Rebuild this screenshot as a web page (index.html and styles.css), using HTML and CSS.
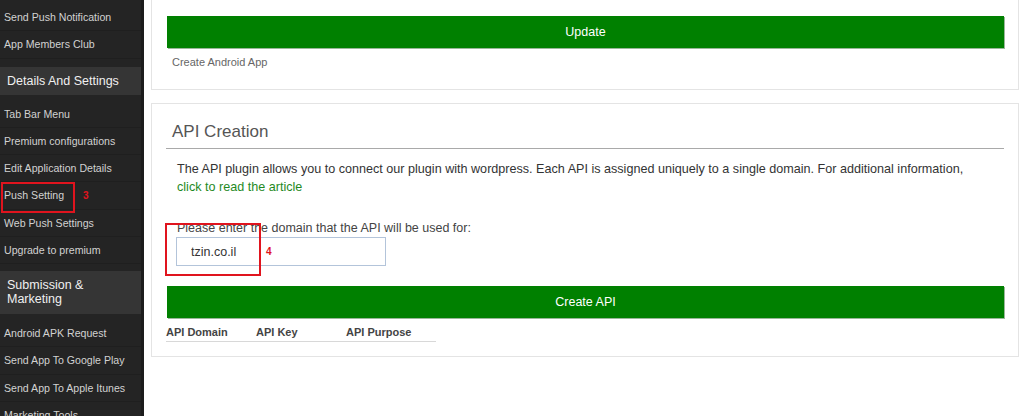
FILE: index.html
```html
<!DOCTYPE html>
<html lang="en">
<head>
<meta charset="utf-8">
<title>API Creation</title>
<link rel="stylesheet" href="styles.css">
</head>
<body>
<div class="layout">
  <aside class="sidebar">
    <a class="nav-item" href="#">Send Push Notification</a>
    <a class="nav-item" href="#">App Members Club</a>
    <div class="nav-head">Details And Settings</div>
    <a class="nav-item" href="#">Tab Bar Menu</a>
    <a class="nav-item" href="#">Premium configurations</a>
    <a class="nav-item" href="#">Edit Application Details</a>
    <a class="nav-item nav-item--marked" href="#">Push Setting<span class="mark-box mark-box--nav"></span><span class="mark-num mark-num--nav">3</span></a>
    <a class="nav-item" href="#">Web Push Settings</a>
    <a class="nav-item" href="#">Upgrade to premium</a>
    <div class="nav-head nav-head--tall">Submission &amp;<br>Marketing</div>
    <a class="nav-item" href="#">Android APK Request</a>
    <a class="nav-item" href="#">Send App To Google Play</a>
    <a class="nav-item" href="#">Send App To Apple Itunes</a>
    <a class="nav-item" href="#">Marketing Tools</a>
  </aside>
  <main class="main">
    <section class="panel panel--cut">
      <button class="btn-green">Update</button>
      <div class="caption">Create Android App</div>
    </section>
    <section class="panel panel--api">
      <h2 class="panel-title">API Creation</h2>
      <p class="intro">The API plugin allows you to connect our plugin with wordpress. Each API is assigned uniquely to a single domain. For additional information,<br><a class="link" href="#">click to read the article</a></p>
      <div class="field">
        <label class="field-label">Please enter the domain that the API will be used for:</label>
        <div class="field-wrap">
          <input class="field-input" type="text" value="tzin.co.il">
          <span class="mark-box mark-box--input"></span>
          <span class="mark-num mark-num--input">4</span>
        </div>
      </div>
      <button class="btn-green btn-green--api">Create API</button>
      <div class="api-table">
        <div class="api-th">API Domain</div>
        <div class="api-th">API Key</div>
        <div class="api-th">API Purpose</div>
      </div>
    </section>
  </main>
</div>
</body>
</html>
```

FILE: styles.css
```css
* { box-sizing: border-box; }
html, body { margin: 0; padding: 0; }
body {
  font-family: "Liberation Sans", Arial, sans-serif;
  background: #fff;
  color: #333;
  width: 1024px;
  height: 416px;
  overflow: hidden;
}
.layout {
  display: flex;
  align-items: flex-start;
  height: 416px;
}
.sidebar {
  width: 144px;
  flex: 0 0 144px;
  height: 416px;
  background: #242424;
  border-right: 3px solid #1c1c1c;
  padding-top: 4px;
  display: flex;
  flex-direction: column;
  overflow: hidden;
}
.nav-item {
  position: relative;
  display: block;
  flex: 0 0 auto;
  height: 27.25px;
  line-height: 27px;
  padding-left: 4px;
  font-size: 10.6px;
  color: #d2d2d2;
  text-decoration: none;
  white-space: nowrap;
  border-bottom: 1px solid #1f1f1f;
}
.nav-head {
  flex: 0 0 auto;
  margin: 8px 0 6px;
  height: 28px;
  line-height: 28px;
  padding-left: 7px;
  background: #353535;
  color: #f0f0f0;
  font-size: 12.5px;
}
.nav-head--tall {
  margin: 7px 0 6px;
  height: 43px;
  line-height: 13.5px;
  padding-top: 8px;
}
.mark-box {
  position: absolute;
  border: 2px solid #e0141e;
  pointer-events: none;
}
.mark-box--nav {
  left: 1px;
  top: 0;
  width: 74px;
  height: 31px;
}
.mark-num {
  position: absolute;
  color: #e0141e;
  font-size: 10px;
  font-weight: bold;
  line-height: 10px;
}
.mark-num--nav {
  left: 83px;
  top: 9px;
}
.main {
  flex: 1;
  padding: 0 5px 0 7px;
}
.panel {
  border: 1px solid #e4e4e4;
  background: #fff;
  padding: 0 14px 0 15px;
}
.panel--cut {
  border-top: none;
  padding-top: 16px;
  padding-bottom: 19px;
}
.btn-green {
  display: block;
  width: 100%;
  height: 32px;
  border: none;
  background: #008000;
  color: #fff;
  font-family: "Liberation Sans", Arial, sans-serif;
  font-size: 12.5px;
  box-shadow: 1px 1px 0 #9ab79a;
  cursor: pointer;
}
.caption {
  margin-top: 6px;
  padding-left: 5px;
  line-height: 16px;
  font-size: 11px;
  color: #666;
}
.panel--api {
  margin-top: 13px;
  padding-top: 18px;
  padding-bottom: 14px;
}
.panel-title {
  margin: 0;
  padding: 0 0 6px 6px;
  font-size: 17px;
  font-weight: normal;
  line-height: 20px;
  color: #555;
  border-bottom: 1px solid #a9a9a9;
  margin-left: -1px;
}
.intro {
  margin: 11px 0 0;
  padding-left: 10px;
  font-size: 12.6px;
  line-height: 18px;
  color: #333;
}
.link {
  color: #1f8a1f;
  text-decoration: none;
}
.field {
  margin-top: 23px;
  padding-left: 9px;
}
.field-label {
  display: block;
  font-size: 12.5px;
  line-height: 18px;
  color: #444;
  padding-left: 1px;
}
.field-wrap {
  position: relative;
  width: 210px;
}
.field-input {
  display: block;
  width: 210px;
  height: 29px;
  border: 1px solid #b3c4da;
  padding: 0 0 0 14px;
  font-family: "Liberation Sans", Arial, sans-serif;
  font-size: 12.5px;
  color: #333;
  outline: none;
  background: #fff;
}
.mark-box--input {
  left: -11px;
  top: -14px;
  width: 96px;
  height: 53px;
}
.mark-num--input {
  left: 90px;
  top: 10px;
}
.btn-green--api {
  margin-top: 20px;
}
.api-table {
  margin-top: 6px;
  margin-left: -1px;
  width: 270px;
  display: grid;
  grid-template-columns: 90px 90px 90px;
  border-bottom: 1px solid #d8d8d8;
}
.api-th {
  font-size: 11px;
  font-weight: bold;
  line-height: 16px;
  color: #444;
  padding-bottom: 1px;
}
```
